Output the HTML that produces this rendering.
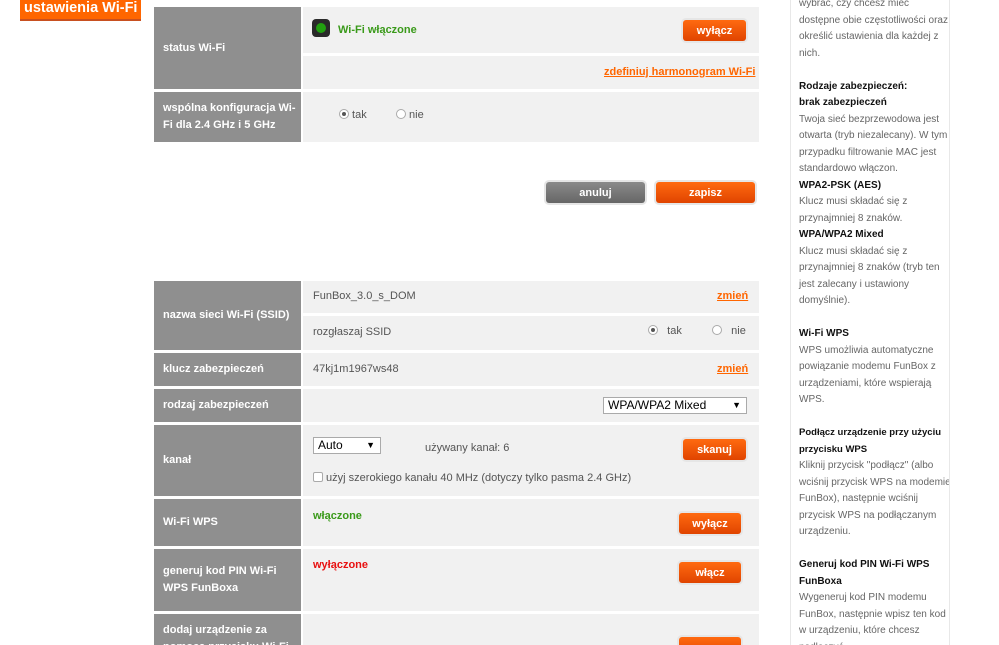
<!DOCTYPE html>
<html><head><meta charset="utf-8"><style>
*{margin:0;padding:0;box-sizing:border-box}
html,body{width:999px;height:645px;overflow:hidden}
body{background:#fff;font-family:"Liberation Sans",Arial,sans-serif;font-size:11px;color:#555;position:relative}
.a{position:absolute;white-space:nowrap}
.lab{position:absolute;left:154px;width:147px;background:#8f8f8f;color:#fff;font-weight:bold;font-size:11px;padding-left:9px;padding-right:0;display:flex;align-items:center;line-height:17px}
.val{position:absolute;left:303px;width:456px;background:#f1f1f1}
.btn{position:absolute;height:21px;border-radius:3px;background:linear-gradient(#ff6a10,#e04400);color:#fff;font-weight:bold;font-size:11px;text-align:center;line-height:22px;box-shadow:0 0 0 2px #e6e6e6}
.gbtn{background:linear-gradient(#8a8a8a,#666)}
.lnk{color:#ff6600;text-decoration:underline;font-weight:bold}
.side{position:absolute;left:790px;top:-10px;width:160px;height:670px;border-left:1px solid #e8e8e8;border-right:1px solid #e8e8e8;padding:6px 0 0 8px;line-height:16.5px;color:#666;font-size:10px;white-space:nowrap;overflow:hidden}
.side b{color:#111}
.radio{display:inline-block;width:10px;height:10px;border:1px solid #aaa;border-radius:50%;background:#fff;vertical-align:-1px;position:relative}
.radio.on:after{content:"";position:absolute;left:2px;top:2px;width:4px;height:4px;border-radius:50%;background:#555}
.sel{position:absolute;background:#fff;border:1px solid #aaa;color:#000;font-size:12px;padding-left:4px;line-height:15px}
</style></head><body>
<div class="a" style="left:20px;top:0;width:121px;height:21px;background:#ff6600;border-bottom:2px solid #c85020;color:#fff;font-weight:bold;font-size:14.5px;padding-left:4px;line-height:17px;overflow:hidden">ustawienia Wi-Fi</div>

<div class="lab" style="top:7px;height:82px">status Wi-Fi</div>
<div class="val" style="top:7px;height:46px"></div>
<div class="a" style="left:312px;top:19px;width:18px;height:18px;border-radius:4px;background:#2a2a2a"><div class="a" style="left:4px;top:4px;width:10px;height:10px;border-radius:50%;background:#22a010"></div></div>
<div class="a" style="left:338px;top:24px;color:#3a9a1a;font-weight:bold">Wi-Fi włączone</div>
<div class="btn" style="left:683px;top:20px;width:63px">wyłącz</div>
<div class="val" style="top:56px;height:33px"></div>
<div class="a lnk" style="left:604px;top:66px">zdefiniuj harmonogram Wi-Fi</div>

<div class="lab" style="top:92px;height:50px">wspólna konfiguracja Wi-Fi dla 2.4 GHz i 5 GHz</div>
<div class="val" style="top:92px;height:50px"></div>
<div class="a" style="left:339px;top:109px"><span class="radio on"></span> tak</div>
<div class="a" style="left:396px;top:109px"><span class="radio"></span> nie</div>

<div class="btn gbtn" style="left:546px;top:182px;width:99px">anuluj</div>
<div class="btn" style="left:656px;top:182px;width:99px">zapisz</div>

<div class="lab" style="top:281px;height:69px">nazwa sieci Wi-Fi (SSID)</div>
<div class="val" style="top:281px;height:32px"></div>
<div class="a" style="left:313px;top:290px">FunBox_3.0_s_DOM</div>
<div class="a lnk" style="left:717px;top:290px">zmień</div>
<div class="val" style="top:316px;height:34px"></div>
<div class="a" style="left:313px;top:326px">rozgłaszaj SSID</div>
<div class="a" style="left:648px;top:325px"><span class="radio on"></span>&nbsp;&nbsp; tak</div>
<div class="a" style="left:712px;top:325px"><span class="radio"></span>&nbsp;&nbsp; nie</div>

<div class="lab" style="top:353px;height:33px">klucz zabezpieczeń</div>
<div class="val" style="top:353px;height:33px"></div>
<div class="a" style="left:313px;top:363px">47kj1m1967ws48</div>
<div class="a lnk" style="left:717px;top:363px">zmień</div>

<div class="lab" style="top:389px;height:33px">rodzaj zabezpieczeń</div>
<div class="val" style="top:389px;height:33px"></div>
<div class="sel" style="left:603px;top:397px;width:144px;height:17px">WPA/WPA2 Mixed<span style="position:absolute;right:5px;font-size:9px">▼</span></div>

<div class="lab" style="top:425px;height:71px">kanał</div>
<div class="val" style="top:425px;height:71px"></div>
<div class="sel" style="left:313px;top:437px;width:68px;height:17px">Auto<span style="position:absolute;right:5px;font-size:9px">▼</span></div>
<div class="a" style="left:425px;top:442px">używany kanał: 6</div>
<div class="btn" style="left:683px;top:439px;width:63px">skanuj</div>
<div class="a" style="left:313px;top:472px"><span style="display:inline-block;width:10px;height:10px;border:1px solid #aaa;border-radius:2px;background:#fff;vertical-align:-1px"></span> użyj szerokiego kanału 40 MHz (dotyczy tylko pasma 2.4 GHz)</div>

<div class="lab" style="top:499px;height:47px">Wi-Fi WPS</div>
<div class="val" style="top:499px;height:47px"></div>
<div class="a" style="left:313px;top:510px;color:#3a9a1a;font-weight:bold">włączone</div>
<div class="btn" style="left:679px;top:513px;width:62px">wyłącz</div>

<div class="lab" style="top:549px;height:62px">generuj kod PIN Wi-Fi WPS FunBoxa</div>
<div class="val" style="top:549px;height:62px"></div>
<div class="a" style="left:313px;top:559px;color:#e81010;font-weight:bold">wyłączone</div>
<div class="btn" style="left:679px;top:562px;width:62px">włącz</div>

<div class="lab" style="top:614px;height:50px;align-items:flex-start;padding-top:8px">dodaj urządzenie za pomocą przycisku Wi-Fi</div>
<div class="val" style="top:614px;height:40px"></div>
<div class="btn" style="left:679px;top:637px;width:62px"></div>

<div class="side">wybrać, czy chcesz mieć<br>dostępne obie częstotliwości oraz<br>określić ustawienia dla każdej z<br>nich.<br><br><b>Rodzaje zabezpieczeń:</b><br><b>brak zabezpieczeń</b><br>Twoja sieć bezprzewodowa jest<br>otwarta (tryb niezalecany). W tym<br>przypadku filtrowanie MAC jest<br>standardowo włączon.<br><b>WPA2-PSK (AES)</b><br>Klucz musi składać się z<br>przynajmniej 8 znaków.<br><b>WPA/WPA2 Mixed</b><br>Klucz musi składać się z<br>przynajmniej 8 znaków (tryb ten<br>jest zalecany i ustawiony<br>domyślnie).<br><br><b>Wi-Fi WPS</b><br>WPS umożliwia automatyczne<br>powiązanie modemu FunBox z<br>urządzeniami, które wspierają<br>WPS.<br><br><b style="font-size:9.5px">Podłącz urządzenie przy użyciu<br>przycisku WPS</b><br>Kliknij przycisk "podłącz" (albo<br>wciśnij przycisk WPS na modemie<br>FunBox), następnie wciśnij<br>przycisk WPS na podłączanym<br>urządzeniu.<br><br><b>Generuj kod PIN Wi-Fi WPS<br>FunBoxa</b><br>Wygeneruj kod PIN modemu<br>FunBox, następnie wpisz ten kod<br>w urządzeniu, które chcesz<br>podłączyć.</div>
</body></html>
